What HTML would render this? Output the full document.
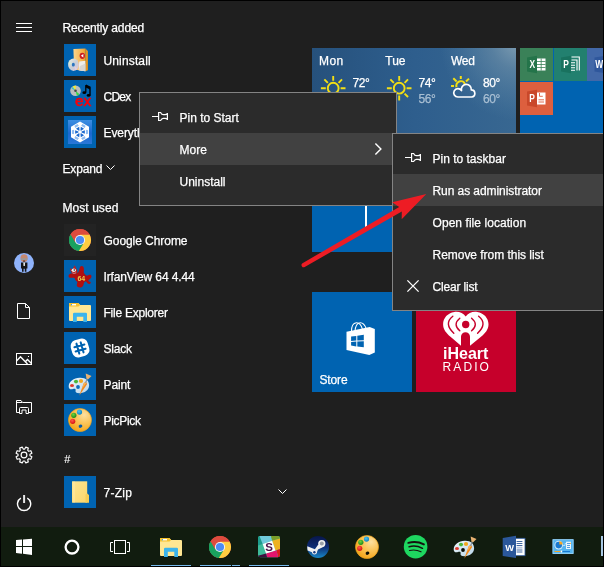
<!DOCTYPE html>
<html lang="en">
<head>
<meta charset="utf-8">
<title>Start menu - Run as administrator</title>
<style>
html,body{margin:0;padding:0;background:#000;}
body{width:604px;height:567px;overflow:hidden;position:relative;font-family:"Liberation Sans",sans-serif;font-size:12px;color:#fff;-webkit-text-stroke:0.250px;}
#screen{position:absolute;left:1px;top:1px;width:602px;height:565px;background:#1f1f1f;overflow:hidden;}
#w{position:absolute;left:-1px;top:-1px;width:604px;height:567px;will-change:transform;}
.hdr{position:absolute;left:62.500px;height:20px;line-height:22px;white-space:nowrap;}
.app{position:absolute;left:64px;width:32px;height:32px;background:#0063b1;overflow:hidden;}
.app svg{position:absolute;left:0;top:0;}
.lbl{position:absolute;left:103.500px;height:32px;line-height:34px;white-space:nowrap;}
.sb{position:absolute;left:0;top:0;}
.tile{position:absolute;background:#0063b1;overflow:hidden;}
.tile svg{position:absolute;left:0;top:0;}
.menu{position:absolute;background:#2b2b2b;border:1px solid #848484;box-sizing:border-box;}
.mi{position:absolute;left:0;right:0;height:32px;line-height:34px;white-space:nowrap;}
.mi.hov{background:#414141;}
.mi span{position:absolute;top:0;}
#taskbar{position:absolute;left:0;top:527px;width:604px;height:40px;background:#111c0f;}
#taskbar svg{position:absolute;}
.ul{position:absolute;top:38px;height:1px;background:#76b9ed;}
</style>
</head>
<body>
<div id="screen"><div id="w">
<!-- ===== left rail ===== -->
<svg class="sb" width="48" height="527" viewBox="0 0 48 527" fill="none" stroke="#fff" stroke-width="1">
  <path d="M16 23.5H32M16 27.5H32M16 31.5H32" shape-rendering="crispEdges"/>
  <circle cx="24" cy="263" r="10" fill="#8fb3fb" stroke="none"/>
  <g stroke="none">
    <ellipse cx="24.100" cy="258.100" rx="3.600" ry="3.900" fill="#c48870"/>
    <rect x="20.800" y="258.300" width="6.600" height="1.600" fill="#9a9a9a"/>
    <rect x="23.100" y="260.600" width="2" height="1" fill="#2a1a14"/>
    <path d="M21 262.500h6.400v6h-1v3.200h-1.600v-3h-1.200v3h-1.600v-3.200h-1z" fill="#161616"/>
    <path d="M23.300 262.500h1.800l-.2 3.600h-1.400z" fill="#e8e8e8"/>
  </g>
  <path d="M17.500 303.500H25.500L29.500 307.500V318.500H17.500Z M25.500 303.500V307.500H29.500"/>
  <rect x="16.500" y="353.500" width="15" height="11"/>
  <path d="M16.500 361L20.500 356.800L27.500 364M25.300 361.700L27.500 359.500L31.500 363.500" stroke-width="1.400"/>
  <rect x="28" y="356" width="1" height="1" fill="#fff" stroke="none"/>
  <path d="M19.500 412.500H16.500V400.500H21L22.500 402.500H31.500V412.500H28.500M16.500 402.500H22"/>
  <path d="M19.500 413.500V408.500Q19.500 407.500 20.500 407.500H27.500Q28.500 407.500 28.500 408.500V413.500H26V410H22V413.500Z"/>
  <g transform="translate(24 455)">
    <circle r="2.900" stroke-width="1.150"/>
    <path d="M0.73 -5.95 L1.79 -7.90 L4.32 -6.85 L3.69 -4.73 L4.73 -3.69 L6.85 -4.32 L7.90 -1.79 L5.95 -0.73 L5.95 0.73 L7.90 1.79 L6.85 4.32 L4.73 3.69 L3.69 4.73 L4.32 6.85 L1.79 7.90 L0.73 5.95 L-0.73 5.95 L-1.79 7.90 L-4.32 6.85 L-3.69 4.73 L-4.73 3.69 L-6.85 4.32 L-7.90 1.79 L-5.95 0.73 L-5.95 -0.73 L-7.90 -1.79 L-6.85 -4.32 L-4.73 -3.69 L-3.69 -4.73 L-4.32 -6.85 L-1.79 -7.90 L-0.73 -5.95Z" stroke-linejoin="round" stroke-width="1.150"/>
  </g>
  <path d="M20.900 498.200A6.600 6.600 0 1 0 27.300 498.200" stroke-width="1.400"/>
  <path d="M24.100 495V503" stroke-width="2" stroke="#e6e6e6"/>
</svg>
<!-- ===== app list ===== -->
<div class="hdr" style="top:17px;letter-spacing:-0.135px">Recently added</div>
<div class="hdr" style="top:158px;letter-spacing:-0.150px">Expand</div>
<svg class="sb" style="left:104.400px;top:162.400px" width="14" height="10" viewBox="0 0 14 10" fill="none" stroke="#fff" stroke-width="1"><path d="M2.500 3.500L6.500 7.500L10.500 3.500"/></svg>
<div class="hdr" style="top:197px;letter-spacing:0.060px">Most used</div>
<div class="hdr" style="top:448.300px;left:64.200px;font-size:11px;-webkit-text-stroke:0.100px">#</div>

<!-- Uninstall -->
<div class="app" style="top:44px"><svg width="32" height="32" viewBox="0 0 32 32">
  <defs>
    <linearGradient id="gbox" x1="0" y1="0" x2="1" y2="0"><stop offset="0" stop-color="#fbd58c"/><stop offset=".75" stop-color="#f6b24a"/><stop offset="1" stop-color="#e99a25"/></linearGradient>
    <linearGradient id="gcd" x1="0" y1="0" x2="1" y2="1"><stop offset="0" stop-color="#e9efe6"/><stop offset=".5" stop-color="#c9cfd6"/><stop offset="1" stop-color="#d9c6dc"/></linearGradient>
  </defs>
  <path d="M9.400 5L21.400 4.500V27.200L10.200 25.600Z" fill="url(#gbox)"/>
  <path d="M21.400 4.500L23.900 7V26.200L21.400 27.200Z" fill="#e6951f"/>
  <path d="M15.200 17.600L21.400 16.800V27.200L14.600 26.200Z" fill="#efede9"/>
  <path d="M16 22L21.400 19.500V27.200L15 26.300Z" fill="#d9d6d2"/>
  <ellipse cx="18.300" cy="11.800" rx="2.700" ry="3.100" fill="#cc2020"/>
  <path d="M16.900 11.800L19.300 10v3.600z" fill="#fff"/>
  <ellipse cx="9.500" cy="20.700" rx="5.400" ry="6.200" fill="url(#gcd)"/>
  <path d="M9.500 20.700L5 17L4.300 20Z" fill="#d6ecd0" opacity=".8"/>
  <path d="M9.500 20.700L13.500 25L11.500 26.500Z" fill="#e3cfe6" opacity=".8"/>
  <ellipse cx="9.300" cy="20.700" rx="1.500" ry="1.900" fill="#2a74c0"/>
</svg></div>
<div class="lbl" style="top:44px;letter-spacing:0.14px">Uninstall</div>

<!-- CDex -->
<div class="app" style="top:80px"><svg width="32" height="32" viewBox="0 0 32 32">
  <circle cx="11.500" cy="10.800" r="5.300" fill="#bdbdbd"/>
  <path d="M11.500 10.800L9 6.200L11.800 5.600Z" fill="#f4ee2a"/>
  <path d="M11.500 10.800L13 15.900L15.500 14.300Z" fill="#37d64a"/>
  <path d="M11.500 10.800L7.500 8.500L8.800 7Z" fill="#38c9c0"/>
  <circle cx="11.500" cy="10.800" r="1.300" fill="#4a4a4a"/>
  <path d="M21.800 5.200L26 7.200V15.500" fill="none" stroke="#000" stroke-width="1.400"/>
  <path d="M21.800 5.200V12.500" fill="none" stroke="#000" stroke-width="1.300"/>
  <path d="M21.800 5.200L26 7.200V9.500L21.800 7.500Z" fill="#000"/>
  <ellipse cx="20.300" cy="12.700" rx="1.900" ry="1.400" fill="#000"/>
  <ellipse cx="24.600" cy="15.400" rx="1.900" ry="1.400" fill="#000"/>
  <text x="11" y="25.800" font-family="Liberation Sans, sans-serif" font-size="15.500" fill="#fb0007" stroke="#fb0007" stroke-width=".5">ex</text>
</svg></div>
<div class="lbl" style="top:80px;letter-spacing:-0.75px">CDex</div>

<!-- Everything -->
<div class="app" style="top:116px"><svg width="32" height="32" viewBox="0 0 32 32">
  <defs><linearGradient id="gev" x1="0" y1="0" x2="0" y2="1"><stop offset="0" stop-color="#3d8fe2"/><stop offset=".55" stop-color="#1b68cf"/><stop offset="1" stop-color="#2a78d8"/></linearGradient></defs>
  <rect x="4" y="4" width="24" height="24" fill="url(#gev)"/>
  <path d="M16 5.600L25 10.800V21.200L16 26.400L7 21.200V10.800Z" fill="#fff"/>
  <path d="M17.55 15.61L20.85 14.14L20.85 17.86L17.55 16.39ZM17.11 17.15L20.04 19.27L16.81 21.14L16.44 17.54ZM15.56 17.54L15.19 21.14L11.96 19.27L14.89 17.15ZM14.45 16.39L11.15 17.86L11.15 14.14L14.45 15.61ZM14.89 14.85L11.96 12.73L15.19 10.86L15.56 14.46ZM16.44 14.46L16.81 10.86L20.04 12.73L17.11 14.85Z" fill="#1d6bd0"/>
  <path d="M21.92 13.85L24.12 14.27L24.12 17.73L21.92 18.15ZM20.83 20.05L21.55 22.17L18.56 23.89L17.09 22.20ZM14.91 22.20L13.44 23.89L10.45 22.17L11.17 20.05ZM10.08 18.15L7.88 17.73L7.88 14.27L10.08 13.85ZM11.17 11.95L10.45 9.83L13.44 8.11L14.91 9.80ZM17.09 9.80L18.56 8.11L21.55 9.83L20.83 11.95Z" fill="#8fbcf0"/>
</svg></div>
<div class="lbl" style="top:116px;letter-spacing:-0.10px">Everything</div>

<!-- Google Chrome -->
<div class="app" style="top:224px;background:#232323"><svg width="32" height="32" viewBox="0 0 32 32">
  <circle cx="16" cy="16" r="11" fill="#dd4b3e"/>
  <path d="M16 16L6.470 10.500A11 11 0 0 0 14.800 26.930L20 18Z" fill="#19a15f"/>
  <path d="M16 16L14.800 26.930A11 11 0 0 0 25.530 10.500L16 10.500Z" fill="#ffcd41"/>
  <path d="M16 10.500L25.530 10.500A11 11 0 0 0 6.470 10.500L11.240 18.750Z" fill="#dd4b3e"/>
  <path d="M11.240 18.750L6.470 10.500A11 11 0 0 0 14.800 26.930L19.500 19.500Z" fill="#19a15f"/>
  <circle cx="16" cy="16" r="5.100" fill="#f4f4f4"/>
  <circle cx="16" cy="16" r="4.100" fill="#4c8bf5"/>
</svg></div>
<div class="lbl" style="top:224px;letter-spacing:-0.06px">Google Chrome</div>

<!-- IrfanView -->
<div class="app" style="top:260px"><svg width="32" height="32" viewBox="0 0 32 32">
  <path d="M13.800 14.500C12.500 13.500 8 12.500 5.500 14.300C3.800 15.600 4.500 18 6.800 17.800C9 17.600 11.200 17.500 13 18.300C13.800 20.500 13.500 22.500 12.800 24.500C12.300 26.500 14.500 28 16.800 27.500C18.800 27 19.500 25 19.800 23.500C20.300 21.800 21.200 21.200 22.500 21.800C23.200 23.500 24.500 24.300 26 23.700C27 23.300 27 22.200 26.300 21.700C25.300 21.700 24.500 21.300 24.200 20.400C25.500 19.500 27.300 18.300 27.500 16.600C27.600 14.800 25.800 14.200 24.300 15.200C23 16 21.500 15.500 20.300 14.800C19.300 12.800 20.200 10.500 19.800 8C19.500 5.800 17 5.200 16 7C15.300 8.500 15.300 10.500 14.500 12Z" fill="#b00f10"/>
  <ellipse cx="16.300" cy="17.300" rx="5.800" ry="5.300" fill="#b00f10"/>
  <path d="M5.800 8.300L8.300 9.200L10.800 5.200L12.300 8.800C13.500 10 13.800 12 13 13.200C11.500 14.200 8.500 13.900 7.500 12.500C6.500 11 6.300 9.500 5.800 8.300Z" fill="#b9201f"/>
  <ellipse cx="9.800" cy="10.300" rx="2.200" ry="1.700" fill="#f2eeee"/>
  <circle cx="10.300" cy="10" r=".8" fill="#222"/>
  <path d="M8 12.200Q10 13.800 12.200 12.300L11.500 13.500H8.800Z" fill="#e8b0b0"/>
  <text x="13.400" y="20.600" font-family="Liberation Sans, sans-serif" font-size="7" font-weight="bold" fill="#ecc94a">64</text>
</svg></div>
<div class="lbl" style="top:260px;letter-spacing:-0.13px">IrfanView 64 4.44</div>

<!-- File Explorer -->
<div class="app" style="top:296px"><svg width="32" height="32" viewBox="0 0 32 32">
  <path d="M5 8Q5 7 6 7H14.300L16.200 9H26Q27 9 27 10V24Q27 25 26 25H6Q5 25 5 24Z" fill="#ffe793"/>
  <path d="M5 8Q5 7 6 7H14.300L16.200 9L14.500 10.400H5Z" fill="#f5c12e"/>
  <rect x="7" y="8" width="5" height="1.400" fill="#fff"/>
  <rect x="7" y="8" width="1" height="1.400" fill="#3f9fe0"/>
  <path d="M9 26V18Q9 16.800 10.200 16.800H21.800Q23 16.800 23 18V26H19.300V20.700H12.800V26Z" fill="#3cb4ec"/>
</svg></div>
<div class="lbl" style="top:296px;letter-spacing:-0.24px">File Explorer</div>

<!-- Slack -->
<div class="app" style="top:332px"><svg width="32" height="32" viewBox="0 0 32 32">
  <g transform="rotate(-16 16 16)">
    <rect x="7.200" y="7.200" width="17.600" height="17.600" rx="6" fill="#fff"/>
    <g stroke="#0063b1" stroke-width="2" stroke-linecap="round"><path d="M13.800 10.800V21.200M18.200 10.800V21.200M10.800 13.800H21.200M10.800 18.200H21.200"/></g>
  </g>
</svg></div>
<div class="lbl" style="top:332px;letter-spacing:-0.20px">Slack</div>

<!-- Paint -->
<div class="app" style="top:368px"><svg width="32" height="32" viewBox="0 0 32 32">
  <defs><linearGradient id="gpal" x1="0" y1="0" x2="1" y2="1"><stop offset="0" stop-color="#eef6fb"/><stop offset="1" stop-color="#b9d6ea"/></linearGradient></defs>
  <path d="M15.500 9.800C21.500 9.400 25.300 12.800 25.100 17.600C24.900 22.400 20.300 25.400 15.300 25.200C12.300 25.100 11.100 23.900 11.600 22.400C12.100 20.900 10.700 20.300 9 21C6.500 22 4.500 20.800 4.700 18C5 13.500 9.800 10.200 15.500 9.800Z" fill="url(#gpal)"/>
  <circle cx="14" cy="19" r="1.900" fill="#0f6cbc"/>
  <ellipse cx="8" cy="17.500" rx="2" ry="1.600" fill="#e03a2d"/>
  <ellipse cx="12" cy="13.600" rx="2.100" ry="1.800" fill="#4cb63a"/>
  <ellipse cx="17" cy="13" rx="2.100" ry="1.900" fill="#f4a81c"/>
  <path d="M15.200 27.700L19.700 15.200L21.700 13.600L23.200 15.900Z" fill="#f28a1e"/>
  <path d="M17.800 21L19.900 15.200L21.600 13.800L22 15.200Z" fill="#f9b458"/>
  <path d="M21 14.800L22.700 10.200L23.800 10.700L22.300 15.300Z" fill="#8e9aa6"/>
  <path d="M22.400 10.500L21.700 5.400L27.500 8L24.200 11.300Z" fill="#e8b272"/>
</svg></div>
<div class="lbl" style="top:368px;letter-spacing:-0.10px">Paint</div>

<!-- PicPick -->
<div class="app" style="top:404px"><svg width="32" height="32" viewBox="0 0 32 32">
  <defs>
    <radialGradient id="gpp" cx=".68" cy=".28" r=".8"><stop offset="0" stop-color="#fde0a0"/><stop offset=".45" stop-color="#fbc55a"/><stop offset="1" stop-color="#f3a316"/></radialGradient>
    <radialGradient id="gb" cx=".4" cy=".35" r=".7"><stop offset="0" stop-color="#4cc3ee"/><stop offset="1" stop-color="#0c7fc0"/></radialGradient>
    <radialGradient id="gg" cx=".4" cy=".35" r=".7"><stop offset="0" stop-color="#6fd63c"/><stop offset="1" stop-color="#16841a"/></radialGradient>
    <radialGradient id="gr" cx=".4" cy=".35" r=".7"><stop offset="0" stop-color="#ff5a4a"/><stop offset="1" stop-color="#d30f12"/></radialGradient>
  </defs>
  <circle cx="16" cy="16" r="11.500" fill="url(#gpp)" stroke="#eaa01c" stroke-width=".7"/>
  <circle cx="15.500" cy="8.100" r="2.600" fill="url(#gb)"/>
  <circle cx="9.800" cy="11.300" r="2.600" fill="url(#gg)"/>
  <circle cx="8.700" cy="17.300" r="2.600" fill="url(#gr)"/>
  <ellipse cx="16.500" cy="22.200" rx="1.900" ry="1.600" fill="#0a5ca8" transform="rotate(-30 16.500 22.200)"/>
</svg></div>
<div class="lbl" style="top:404px;letter-spacing:-0.30px">PicPick</div>

<!-- 7-Zip -->
<div class="app" style="top:476px"><svg width="32" height="32" viewBox="0 0 32 32">
  <defs><linearGradient id="g7z" x1="0" y1="0" x2="1" y2="1"><stop offset="0" stop-color="#fde691"/><stop offset="1" stop-color="#fbd66c"/></linearGradient></defs>
  <rect x="8" y="5.300" width="15.200" height="21.400" fill="url(#g7z)"/>
  <rect x="9.500" y="5.300" width="1" height="21.400" fill="#fff0b8" opacity=".7"/>
  <path d="M21.500 18.500L23.200 17.500L25 19V26.700H21.500Z" fill="#f5cd58"/>
</svg></div>
<div class="lbl" style="top:476px;letter-spacing:0.25px">7-Zip</div>
<svg class="sb" style="left:275.600px;top:486.400px" width="14" height="10" viewBox="0 0 14 10" fill="none" stroke="#fff" stroke-width="1"><path d="M2.500 3.500L6.500 7.500L10.500 3.500"/></svg>
<!-- ===== tiles ===== -->
<!-- weather -->
<div class="tile" style="left:312px;top:48px;width:204px;height:100px;background:#2a5c8f">
  <svg width="204" height="100" viewBox="0 0 204 100">
    <defs>
      <linearGradient id="gw1" x1="0" y1="0" x2="1" y2="0"><stop offset="0" stop-color="#26517c"/><stop offset=".5" stop-color="#2e5e8d"/><stop offset="1" stop-color="#386791"/></linearGradient>
      <radialGradient id="gw2" gradientUnits="userSpaceOnUse" cx="206" cy="-6" r="78"><stop offset="0" stop-color="#86a3b6" stop-opacity=".95"/><stop offset=".35" stop-color="#6d90aa" stop-opacity=".6"/><stop offset="1" stop-color="#5b88aa" stop-opacity="0"/></radialGradient>
      
    </defs>
    <rect width="204" height="100" fill="url(#gw1)"/>
    <rect width="204" height="100" fill="url(#gw2)"/>
    
    <g fill="none" stroke="#f3df14" stroke-width="1.900">
      <circle cx="21.2" cy="40.2" r="5.400"/><path d="M28.60 40.20L33.50 40.20M26.57 45.57L30.04 49.04M21.20 47.60L21.20 52.50M15.83 45.57L12.36 49.04M13.80 40.20L8.90 40.20M15.83 34.83L12.36 31.36M21.20 32.80L21.20 27.90M26.57 34.83L30.04 31.36"/>
      <circle cx="87.2" cy="40.2" r="5.400"/><path d="M94.60 40.20L99.50 40.20M92.57 45.57L96.04 49.04M87.20 47.60L87.20 52.50M81.83 45.57L78.36 49.04M79.80 40.20L74.90 40.20M81.83 34.83L78.36 31.36M87.20 32.80L87.20 27.90M92.57 34.83L96.04 31.36"/>
      <path d="M144.600 39.200A4.400 4.400 0 0 1 152.900 36M148.800 28v3M139 38.100h3M141.300 30.300l3.300 3.200M157 30.600l-3 2.900" stroke-width="2"/>
    </g>
    <path d="M146 49A4.200 4.200 0 1 1 149.500 42.600A5 5 0 1 1 159.300 41.800A3.610 3.610 0 0 1 159.600 49Z" fill="none" stroke="#fff" stroke-width="1.700" stroke-linejoin="round"/>
  </svg>
  <div style="position:absolute;left:7px;top:5px;line-height:16px;letter-spacing:0.400px">Mon</div>
  <div style="position:absolute;left:73.300px;top:5px;line-height:16px">Tue</div>
  <div style="position:absolute;left:139px;top:5px;line-height:16px;letter-spacing:-0.300px">Wed</div>
  <div style="position:absolute;left:40.500px;top:27px;line-height:16px;letter-spacing:-0.400px">72°</div>
  <div style="position:absolute;left:106.500px;top:27px;line-height:16px;letter-spacing:-0.400px">74°</div>
  <div style="position:absolute;left:106.500px;top:43px;line-height:16px;letter-spacing:-0.400px;color:#a9bfd3">56°</div>
  <div style="position:absolute;left:171px;top:27px;line-height:16px;letter-spacing:-0.400px">80°</div>
  <div style="position:absolute;left:171px;top:43px;line-height:16px;letter-spacing:-0.400px;color:#a9bfd3">60°</div>
</div>

<!-- office folder tile -->
<div class="tile" style="left:520px;top:48px;width:84px;height:100px">
  <svg width="84" height="100" viewBox="0 0 84 100" font-family="Liberation Sans, sans-serif" font-weight="bold">
    <rect x="0" y="0" width="33" height="33" fill="#3a8158"/>
    <rect x="34" y="0" width="33" height="33" fill="#22806f"/>
    <rect x="67" y="0" width="17" height="33" fill="#4268a8"/>
    <rect x="0" y="34" width="33" height="33" fill="#dd5f3e"/>
    <!-- excel -->
    <path d="M7 9.500L17 7.800V25.200L7 23.500Z" fill="#24744a"/>
    <rect x="17" y="10.500" width="8.500" height="12" fill="#fff"/>
    <path d="M17 13.500h8.500M17 16.500h8.500M17 19.500h8.500M21.200 10.500v12" stroke="#3a8158" stroke-width=".8"/>
    <text transform="translate(9.400 20.200) scale(.8 1)" font-size="10.500" fill="#fff">X</text>
    <!-- project -->
    <path d="M41 9.500L51 7.800V25.200L41 23.500Z" fill="#19725f"/>
    <path d="M51.500 9h7.800v13.500M51.500 12h5.500v10.500" fill="none" stroke="#fff" stroke-width="1.100"/>
    <path d="M51 14.800h4M51 17.300h4M51 19.800h4M51 22.300h4" stroke="#fff" stroke-width="1.100"/>
    <text transform="translate(43.200 20.200) scale(.8 1)" font-size="10.500" fill="#fff">P</text>
    <!-- word -->
    <path d="M74.500 9.500L84 7.900V25.100L74.500 23.500Z" fill="#2f579c"/>
    <text transform="translate(75.200 20.200) scale(.8 1)" font-size="10.500" fill="#fff">W</text>
    <!-- powerpoint -->
    <path d="M7 43.500L17 41.800V59.200L7 57.500Z" fill="#c9482a"/>
    <rect x="17" y="44.500" width="8.500" height="12" fill="#fff"/>
    <path d="M19.500 45v3.300h3.300" fill="none" stroke="#dd5f3e" stroke-width=".9"/>
    <path d="M18.500 51.800h5.500M18.500 54h5.500" stroke="#dd5f3e" stroke-width=".9"/>
    <text transform="translate(9.300 54.200) scale(.8 1)" font-size="10.500" fill="#fff">P</text>
  </svg>
</div>

<!-- blue tile behind menus -->
<div class="tile" style="left:312px;top:152px;width:100px;height:100px">
  <div style="position:absolute;left:53px;top:30px;width:2px;height:45px;background:#fff"></div>
</div>

<!-- store -->
<div class="tile" style="left:312px;top:292px;width:100px;height:100px">
  <svg width="100" height="100" viewBox="0 0 100 100">
    <path d="M39.400 40.500C39.300 34.500 41.300 30.900 44.400 30.800C47.300 30.700 49.400 33.500 50.500 37.300" fill="none" stroke="#fff" stroke-width="1.100"/>
    <path d="M42.900 39.800C43.300 34.500 45.300 30.800 48.200 30.700C50.900 30.600 53 33.300 54.200 36.600" fill="none" stroke="#fff" stroke-width="1.100"/>
    <path d="M34.500 39.700L57.700 35L62.800 37.100V60.400L57.300 63L34.500 57.900Z" fill="#fff"/>
    <path d="M39.100 44.600L44.300 43.900V48.600L39.100 48.900Z M45.300 43.700L51.800 42.800V48.300L45.300 48.600Z M39.100 49.900L44.300 49.600V54.400L39.100 53.600Z M45.300 49.600L51.800 49.300V55.300L45.300 54.500Z" fill="#0063b1"/>
  </svg>
  <div style="position:absolute;left:7.500px;top:78px;line-height:20px;letter-spacing:-0.150px">Store</div>
</div>

<!-- iHeart -->
<div class="tile" style="left:416px;top:292px;width:100px;height:100px;background:#c6002b">
  <svg width="100" height="100" viewBox="0 0 100 100" font-family="Liberation Sans, sans-serif" fill="#fff">
    <path d="M49.700 24.600C47.300 20.800 42.800 19.400 38.300 20C31.800 20.900 27.100 26 27.100 32.300C27.100 37.600 30.300 41.200 34.500 44.800L45 53.800V44.800A4.500 4.500 0 0 1 54 44.800V53.800L65 44.800C69.300 41.200 72.500 37.600 72.500 32.300C72.500 26 67.700 20.900 61.200 20C56.700 19.400 52.200 20.800 49.700 24.600Z"/>
    <circle cx="49.700" cy="32.500" r="3.700" fill="#c6002b"/>
    <g fill="none" stroke="#c6002b" stroke-width="1.400" stroke-linecap="round">
      <path d="M43.800 26.200Q36.400 32.300 43.800 38.700"/>
      <path d="M55.600 26.200Q63 32.300 55.600 38.700"/>
      <path d="M36.800 24.200Q27.500 31.500 37.800 41.200"/>
      <path d="M62.600 24.200Q71.900 31.500 61.600 41.200"/>
    </g>
    <text x="49.700" y="67.200" font-size="16" font-weight="bold" text-anchor="middle">iHeart</text>
    <text x="50.800" y="79.300" font-size="12" text-anchor="middle" letter-spacing="2.100">RADIO</text>
  </svg>
</div>
<!-- ===== context menu 1 ===== -->
<div class="menu" style="left:139px;top:92px;width:258px;height:114px">
  <div class="mi" style="top:8px"><span style="left:39.500px">Pin to Start</span></div>
  <div class="mi hov" style="top:40px"><span style="left:39.500px">More</span></div>
  <div class="mi" style="top:72px"><span style="left:39.500px">Uninstall</span></div>
  <svg class="sb" width="256" height="112" viewBox="0 0 256 112" fill="none" stroke="#fff" stroke-width="1">
    <path d="M12 23.500H18.500M18.600 19V28M27.400 20V27M18.500 19.500H20.600Q21.600 21.700 23.300 21.700H25Q26.500 21.700 27.500 20.500M18.500 27.500H20.600Q21.600 25.300 23.300 25.300H25Q26.500 25.300 27.500 26.500" stroke-width="1.200"/>
    <path d="M235.400 50.600L240.900 56.100L235.400 61.600" stroke-width="1.400"/>
  </svg>
</div>
<!-- ===== context menu 2 ===== -->
<div class="menu" style="left:392px;top:133px;width:220px;height:178px">
  <div class="mi" style="top:8px"><span style="left:39.500px">Pin to taskbar</span></div>
  <div class="mi hov" style="top:40px"><span style="left:39.500px;letter-spacing:-0.070px">Run as administrator</span></div>
  <div class="mi" style="top:72px"><span style="left:39.500px;letter-spacing:0.060px">Open file location</span></div>
  <div class="mi" style="top:104px"><span style="left:39.500px;letter-spacing:-0.030px">Remove from this list</span></div>
  <div class="mi" style="top:136px"><span style="left:39.500px;letter-spacing:-0.170px">Clear list</span></div>
  <svg class="sb" width="218" height="176" viewBox="0 0 218 176" fill="none" stroke="#fff" stroke-width="1">
    <path d="M12 23.500H18.500M18.600 19V28M27.400 20V27M18.500 19.500H20.600Q21.600 21.700 23.300 21.700H25Q26.500 21.700 27.500 20.500M18.500 27.500H20.600Q21.600 25.300 23.300 25.300H25Q26.500 25.300 27.500 26.500" stroke-width="1.200"/>
    <path d="M14.400 146.400L25.600 157.600M25.600 146.400L14.400 157.600" stroke-width="1.300"/>
  </svg>
</div>
<!-- ===== red arrow ===== -->
<svg class="sb" width="604" height="567" viewBox="0 0 604 567">
  <path d="M302.500 263.200L399.200 206.900L392.200 202.300L426.300 194L401.700 219.200L401.800 211.400L304.700 267A2.200 2.200 0 0 1 302.500 263.200Z" fill="#ed1c24"/>
</svg>
<!-- ===== taskbar ===== -->
<div id="taskbar">
  <svg style="left:0;top:0" width="604" height="40" viewBox="0 0 604 40">
    <path d="M16 13.100L22 12.600V19H16Z M23 12.400L32 11.700V19H23Z M16 20H22V26.700L16 25.900Z M23 20H32V28L23 26.800Z" fill="#fff"/>
    <circle cx="72" cy="20.100" r="6.400" fill="none" stroke="#fff" stroke-width="2.300"/>
    <g fill="none" stroke="#fff" stroke-width="1"><rect x="114.500" y="13.500" width="11" height="13"/><path d="M113 15.500H110.500V24.500H113M127 15.500H129.500V24.500H127"/></g>
    <rect x="601" y="9" width="2" height="20" fill="#a9c9e4"/>
  </svg>
  <!-- file explorer -->
  <svg style="left:155px;top:3.500px" width="32" height="32" viewBox="0 0 32 32">
    <path d="M5 8Q5 7 6 7H14.300L16.200 9H26Q27 9 27 10V24Q27 25 26 25H6Q5 25 5 24Z" fill="#ffe793"/>
    <path d="M5 8Q5 7 6 7H14.300L16.200 9L14.500 10.400H5Z" fill="#f5c12e"/>
    <rect x="7" y="8" width="5" height="1.400" fill="#fff"/>
    <rect x="7" y="8" width="1" height="1.400" fill="#3f9fe0"/>
    <path d="M9 26V18Q9 16.800 10.200 16.800H21.800Q23 16.800 23 18V26H19.300V20.700H12.800V26Z" fill="#3cb4ec"/>
  </svg>
  <!-- chrome -->
  <svg style="left:204.300px;top:3.900px" width="32" height="32" viewBox="0 0 32 32">
    <circle cx="16" cy="16" r="11" fill="#dd4b3e"/>
    <path d="M16 16L6.470 10.500A11 11 0 0 0 14.800 26.930L20 18Z" fill="#19a15f"/>
    <path d="M16 16L14.800 26.930A11 11 0 0 0 25.530 10.500L16 10.500Z" fill="#ffcd41"/>
    <path d="M16 10.500L25.530 10.500A11 11 0 0 0 6.470 10.500L11.240 18.750Z" fill="#dd4b3e"/>
    <path d="M11.240 18.750L6.470 10.500A11 11 0 0 0 14.800 26.930L19.500 19.500Z" fill="#19a15f"/>
    <circle cx="16" cy="16" r="5.100" fill="#f4f4f4"/>
    <circle cx="16" cy="16" r="4.100" fill="#4c8bf5"/>
  </svg>
  <!-- slack -->
  <svg style="left:258px;top:9px" width="22" height="22" viewBox="0 0 22 22">
    <defs><clipPath id="cs"><rect x="0" y="0" width="22" height="21.300" rx="2.200"/></clipPath></defs>
    <g clip-path="url(#cs)">
      <rect width="22" height="22" fill="#3ebb9a"/>
      <path d="M0 0H2L4.700 8L0 9.500Z" fill="#1d9c8c"/>
      <path d="M1.500 0H13L14.200 4.800L4.700 8Z" fill="#70cadb"/>
      <path d="M13 0H22V2.500L14.200 4.800Z" fill="#7a9e2a"/>
      <path d="M14.200 4.800L22 2.500V13L17.500 14.500Z" fill="#eeb220"/>
      <path d="M18.500 14.200L22 13V22H20.300Z" fill="#dc1a1a"/>
      <path d="M8 17.500L18.500 14.200L20.300 22H9.300Z" fill="#e5146e"/>
      <path d="M0 19.800L8 17.500L9.300 22H0Z" fill="#3f0f3f"/>
      <path d="M4.700 8L14.200 4.800L17.500 14.500L8 17.500Z" fill="#fff"/>
      <text x="11.200" y="15.200" font-family="Liberation Sans, sans-serif" font-size="11.500" font-weight="bold" fill="#4a154b" text-anchor="middle">S</text>
    </g>
  </svg>
  <!-- steam -->
  <svg style="left:306px;top:8px" width="24" height="24" viewBox="0 0 24 24">
    <defs><linearGradient id="gst" x1="0" y1="0" x2="0" y2="1"><stop offset="0" stop-color="#08164a"/><stop offset=".5" stop-color="#0e2c74"/><stop offset="1" stop-color="#1887c6"/></linearGradient></defs>
    <circle cx="12" cy="11.900" r="11" fill="url(#gst)"/>
    <path d="M1.300 11.200L8.900 14.200L12.300 9.400L16.600 12.200L12 14.400L10.400 18.600L6 17.300L1.600 15.400Q1.100 13.200 1.300 11.200Z" fill="#f1f1f1"/>
    <circle cx="15.800" cy="8.600" r="3.600" fill="#f1f1f1"/>
    <circle cx="15.800" cy="8.600" r="2" fill="#9aa0a8"/>
    <circle cx="8.400" cy="17.300" r="2.300" fill="#f1f1f1"/>
    <circle cx="8.400" cy="17.300" r="1.200" fill="#143a82"/>
  </svg>
  <!-- picpick -->
  <svg style="left:350.900px;top:3.800px" width="32" height="32" viewBox="0 0 32 32">
    <circle cx="16" cy="16" r="11.500" fill="url(#gpp)" stroke="#eaa01c" stroke-width=".7"/>
    <circle cx="15.500" cy="8.100" r="2.600" fill="url(#gb)"/>
    <circle cx="9.800" cy="11.300" r="2.600" fill="url(#gg)"/>
    <circle cx="8.700" cy="17.300" r="2.600" fill="url(#gr)"/>
    <ellipse cx="16.500" cy="22.200" rx="1.900" ry="1.600" fill="#0a0d06" transform="rotate(-30 16.500 22.200)"/>
  </svg>
  <!-- spotify -->
  <svg style="left:403px;top:7px" width="26" height="26" viewBox="0 0 26 26">
    <circle cx="12.600" cy="12.700" r="11.800" fill="#1ed760"/>
    <g fill="none" stroke="#15110f" stroke-linecap="round">
      <path d="M5.300 8.900Q13.500 6.600 20.900 10.400" stroke-width="1.900"/>
      <path d="M6.100 12.700Q13 10.900 19.500 14.300" stroke-width="1.500"/>
      <path d="M6.500 16.500Q12.500 15.100 18 17.800" stroke-width="1.200"/>
    </g>
  </svg>
  <!-- paint -->
  <svg style="left:448.500px;top:3.500px" width="32" height="32" viewBox="0 0 32 32">
    <path d="M15.500 9.800C21.500 9.400 25.300 12.800 25.100 17.600C24.900 22.400 20.300 25.400 15.300 25.200C12.300 25.100 11.100 23.900 11.600 22.400C12.100 20.900 10.700 20.300 9 21C6.500 22 4.500 20.800 4.700 18C5 13.500 9.800 10.200 15.500 9.800Z" fill="url(#gpal)"/>
    <circle cx="14" cy="19" r="1.900" fill="#0a0d06"/>
    <ellipse cx="8" cy="17.500" rx="2" ry="1.600" fill="#e03a2d"/>
    <ellipse cx="12" cy="13.600" rx="2.100" ry="1.800" fill="#4cb63a"/>
    <ellipse cx="17" cy="13" rx="2.100" ry="1.900" fill="#f4a81c"/>
    <path d="M15.200 27.700L19.700 15.200L21.700 13.600L23.200 15.900Z" fill="#f28a1e"/>
    <path d="M17.800 21L19.900 15.200L21.600 13.800L22 15.200Z" fill="#f9b458"/>
    <path d="M21 14.800L22.700 10.200L23.800 10.700L22.300 15.300Z" fill="#8e9aa6"/>
    <path d="M22.400 10.500L21.700 5.400L27.500 8L24.200 11.300Z" fill="#e8b272"/>
  </svg>
  <!-- word -->
  <svg style="left:500px;top:6px" width="28" height="28" viewBox="0 0 28 28">
    <rect x="14" y="5.300" width="11" height="17.400" fill="#fff" stroke="#2b579a" stroke-width=".8"/>
    <path d="M16.600 8.500h5.800M16.600 10.500h5.800M16.600 12.500h5.800M16.600 17h5.800M16.600 19h5.800" stroke="#2b579a" stroke-width=".9"/>
    <rect x="16.600" y="13.700" width="5.800" height="2" fill="#b9c8e0"/>
    <path d="M2.700 5.100L16 2.700V24.900L2.700 23.100Z" fill="#2b579a"/>
    <text x="9.600" y="17.500" font-family="Liberation Sans, sans-serif" font-size="9.300" font-weight="bold" fill="#fff" text-anchor="middle">W</text>
  </svg>
  <!-- control panel -->
  <svg style="left:552px;top:12px" width="22" height="16" viewBox="0 0 22 16">
    <rect x=".600" y=".300" width="20.900" height="14.600" fill="#55b4f0"/>
    <rect x="1" y=".700" width="20.100" height="13.800" fill="none" stroke="#9ed6fa" stroke-width=".8"/>
    <circle cx="6.700" cy="6.100" r="4.300" fill="#cfeafc"/>
    <circle cx="6.700" cy="6.100" r="3.300" fill="#1878d0"/>
    <path d="M7.300 5.500V2.200A3.300 3.300 0 0 1 10.600 5.500Z" fill="#f5a623"/>
    <rect x="14" y="2.700" width="5" height="7.300" fill="#e9f5fd"/>
    <path d="M15 4.500h3M15 6.500h3M15 8.500h3" stroke="#1878d0" stroke-width=".7"/>
    <rect x="18" y="3.800" width="1" height="1" fill="#f5a623"/>
    <path d="M11 6.500h2v-2h1" fill="none" stroke="#e9f5fd" stroke-width=".6"/>
    <rect x="2.500" y="12" width="6" height="1" fill="#f5a623"/>
    <rect x="8.800" y="11.500" width="1.400" height="2" fill="#fff"/>
    <rect x="10.500" y="12" width="7.500" height="1" fill="#1878d0"/>
  </svg>
  <div class="ul" style="left:151px;width:40px"></div>
  <div class="ul" style="left:200px;width:31px"></div><div class="ul" style="left:232px;width:8px"></div>
  <div class="ul" style="left:249px;width:40px"></div>
</div>
</div></div>
</body>
</html>
